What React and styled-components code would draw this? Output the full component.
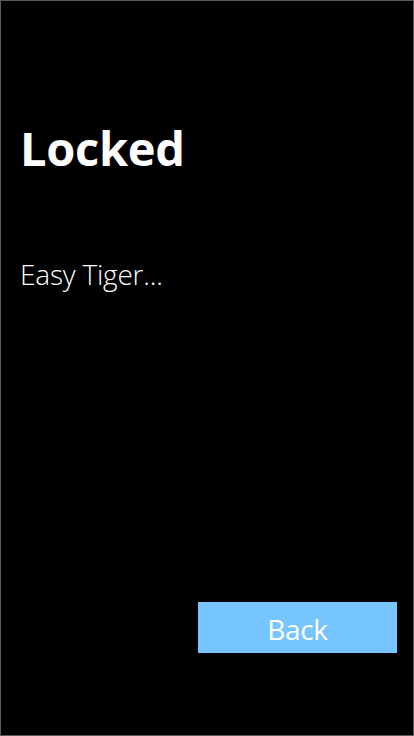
import React from "react";
import styled, { createGlobalStyle } from "styled-components";

const GlobalStyle = createGlobalStyle`
  html, body {
    margin: 0;
    padding: 0;
    background: #000;
  }
  * {
    box-sizing: border-box;
  }
`;

export default function App() {
  return (
    <>
      <GlobalStyle />
      <Screen>
        <Title>Locked</Title>
        <Message>Easy Tiger...</Message>
        <Footer>
          <BackButton>Back</BackButton>
        </Footer>
      </Screen>
    </>
  );
}

const Screen = styled.div`
  width: 414px;
  height: 736px;
  border: 1px solid #5a5a5a;
  background: #000;
  display: flex;
  flex-direction: column;
  padding: 0 16px 82px 19px;
  font-family: "Open Sans", "Noto Sans", sans-serif;
  color: #fff;
`;

const Title = styled.h1`
  margin: 112px 0 0;
  font-size: 47px;
  font-weight: 700;
  line-height: 70px;
  letter-spacing: -0.3px;
`;

const Message = styled.p`
  margin: 73px 0 0;
  font-size: 28px;
  font-weight: 300;
  line-height: 36px;
  letter-spacing: -0.2px;
`;

const Footer = styled.div`
  margin-top: auto;
  display: flex;
  justify-content: flex-end;
`;

const BackButton = styled.button`
  width: 199px;
  height: 51px;
  border: none;
  background: #76c5ff;
  color: #fff;
  font-family: inherit;
  font-size: 28px;
  font-weight: 400;
  letter-spacing: -0.3px;
  padding: 2px 0 0;
  cursor: pointer;
`;
